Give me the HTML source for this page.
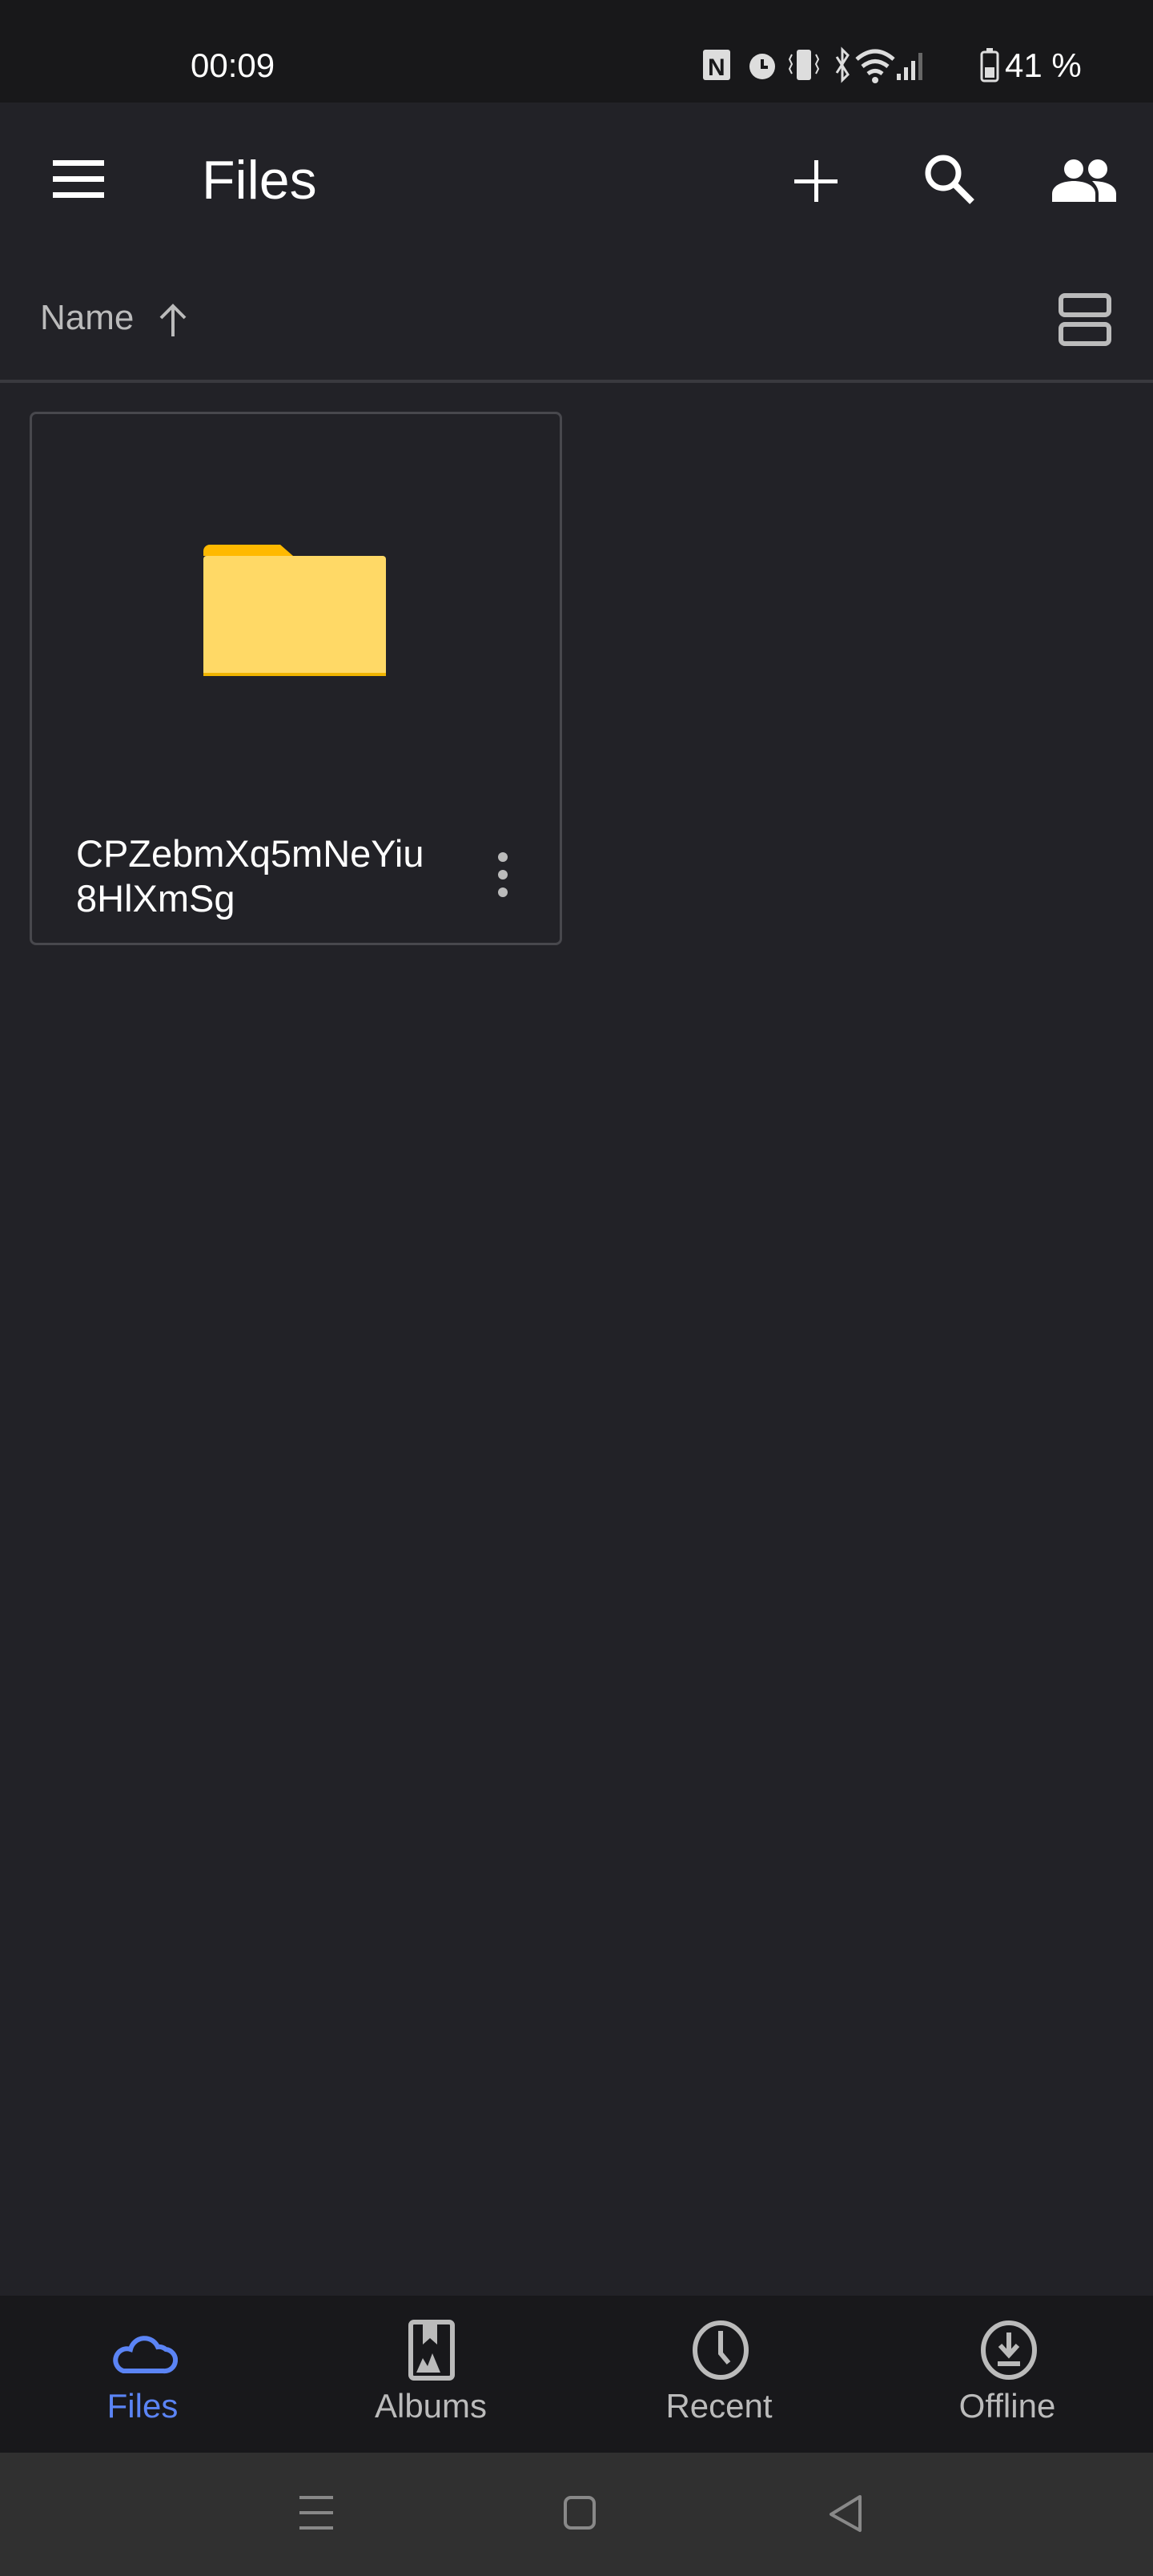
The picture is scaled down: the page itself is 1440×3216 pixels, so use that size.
<!DOCTYPE html>
<html><head><meta charset="utf-8"><style>
*{margin:0;padding:0;box-sizing:border-box}
body{width:1440px;height:3216px;background:#222227;font-family:"Liberation Sans",sans-serif;position:relative;overflow:hidden;color:#fff}
.abs{position:absolute}
</style></head><body>
<div class="abs" style="left:0;top:0;width:1440px;height:128px;background:#18181a"></div>
<div class="abs" style="left:238px;top:58px;font-size:42px;color:#fff">00:09</div>
<svg class="abs" style="left:870px;top:56px" width="490" height="50" viewBox="0 0 490 50">
<rect x="8" y="6" width="34" height="38" rx="3" fill="#ddd"/><text x="14" y="38" font-size="30" font-weight="bold" fill="#18181a" font-family="Liberation Sans">N</text>
<circle cx="82" cy="27" r="16" fill="#ddd"/><path d="M82 18v10h7" stroke="#18181a" stroke-width="4" fill="none"/>
<rect x="125" y="6" width="18" height="38" rx="3" fill="#ddd"/><path d="M119 12l-3 6 3 6-3 6 3 6M149 12l3 6-3 6 3 6-3 6" stroke="#ddd" stroke-width="2" fill="none"/>
<path d="M175 15l14 22-7 7V6l7 7-14 22" stroke="#ddd" stroke-width="3" fill="none"/>
<path d="M200 18q23-20 46 0M207 27q16-13 32 0M214 36q9-7 18 0" stroke="#ddd" stroke-width="5" fill="none"/><circle cx="223" cy="44" r="4" fill="#ddd"/>
<rect x="250" y="36" width="5" height="8" fill="#ddd"/><rect x="259" y="28" width="5" height="16" fill="#ddd"/><rect x="268" y="20" width="5" height="24" fill="#ddd"/><rect x="277" y="10" width="5" height="34" fill="#666"/>
<rect x="356" y="9" width="20" height="36" rx="3" stroke="#ddd" stroke-width="3" fill="none"/><rect x="360" y="28" width="12" height="13" fill="#ddd"/><rect x="362" y="4" width="8" height="4" fill="#ddd"/>
</svg>
<div class="abs" style="left:1255px;top:58px;font-size:42px;color:#fff">41 %</div>
<svg class="abs" style="left:66px;top:200px" width="64" height="48"><rect y="0" width="64" height="7" fill="#fff"/><rect y="20" width="64" height="7" fill="#fff"/><rect y="40" width="64" height="7" fill="#fff"/></svg>
<div class="abs" style="left:252px;top:186px;font-size:68px;font-weight:500">Files</div>
<svg class="abs" style="left:992px;top:200px" width="56" height="56"><rect x="25" y="0" width="5" height="52" fill="#fff"/><rect x="0" y="24" width="54" height="5" fill="#fff"/></svg>
<svg class="abs" style="left:1152px;top:190px" width="70" height="70"><circle cx="26" cy="26" r="19" stroke="#fff" stroke-width="7" fill="none"/><path d="M40 40l22 22" stroke="#fff" stroke-width="8"/></svg>
<svg class="abs" style="left:1314px;top:196px" width="82" height="58"><circle cx="27" cy="15" r="12" fill="#fff"/><circle cx="57" cy="15" r="12" fill="#fff"/><path d="M0 56v-10c0-12 16-16 27-16s27 4 27 16v10z" fill="#fff"/><path d="M50 30c14 0 30 4 30 16v10H58v-10c0-6-3-11-8-16z" fill="#fff"/></svg>
<div class="abs" style="left:50px;top:372px;font-size:44px;color:#bbb">Name</div>
<svg class="abs" style="left:196px;top:378px" width="40" height="44"><path d="M20 42V4M5 19L20 4l15 15" stroke="#bbb" stroke-width="4" fill="none"/></svg>
<svg class="abs" style="left:1322px;top:366px" width="66" height="66"><rect x="3" y="3" width="60" height="24" rx="5" stroke="#bbb" stroke-width="6" fill="none"/><rect x="3" y="39" width="60" height="24" rx="5" stroke="#bbb" stroke-width="6" fill="none"/></svg>
<div class="abs" style="left:0;top:474px;width:1440px;height:4px;background:#3a3a3f"></div>
<div class="abs" style="left:37px;top:514px;width:665px;height:666px;border:3px solid #48484d;border-radius:8px"></div>
<svg class="abs" style="left:254px;top:680px" width="230" height="166" viewBox="0 0 230 166"><path d="M0 8a8 8 0 0 1 8-8h88l16 14H0z" fill="#ffb900"/><rect x="0" y="14" width="228" height="150" rx="4" fill="#ffd966"/><rect x="0" y="160" width="228" height="4" fill="#f0b400"/></svg>
<div class="abs" style="left:95px;top:1038px;font-size:47px;line-height:56px;color:#fff">CPZebmXq5mNeYiu<br>8HlXmSg</div>
<svg class="abs" style="left:618px;top:1062px" width="20" height="64"><circle cx="10" cy="8" r="6" fill="#bbb"/><circle cx="10" cy="30" r="6" fill="#bbb"/><circle cx="10" cy="52" r="6" fill="#bbb"/></svg>
<div class="abs" style="left:0;top:2866px;width:1440px;height:196px;background:#18181b"></div>
<svg class="abs" style="left:136px;top:2906px" width="86" height="60"><path d="M18 54h50a13 13 0 0 0 3-27a13 13 0 0 0-10-3a18 18 0 0 0-34 3a14 14 0 0 0-9 27z" stroke="#5b84f5" stroke-width="6" fill="none"/></svg>
<div class="abs" style="left:0;top:2980px;width:356px;text-align:center;font-size:42px;color:#5b84f5">Files</div>
<svg class="abs" style="left:510px;top:2896px" width="58" height="76"><rect x="3" y="3" width="52" height="70" rx="4" stroke="#bbb" stroke-width="6" fill="none"/><path d="M18 3v28l9-8 9 8V3z" fill="#bbb"/><path d="M10 66l8-18 6 10 6-16 10 24z" fill="#bbb"/></svg>
<div class="abs" style="left:360px;top:2980px;width:356px;text-align:center;font-size:42px;color:#bbb">Albums</div>
<svg class="abs" style="left:864px;top:2896px" width="72" height="76"><ellipse cx="36" cy="38" rx="32" ry="34" stroke="#bbb" stroke-width="6" fill="none"/><path d="M36 14v28l10 12" stroke="#bbb" stroke-width="6" fill="none"/></svg>
<div class="abs" style="left:720px;top:2980px;width:356px;text-align:center;font-size:42px;color:#bbb">Recent</div>
<svg class="abs" style="left:1224px;top:2896px" width="72" height="76"><ellipse cx="36" cy="38" rx="32" ry="34" stroke="#bbb" stroke-width="6" fill="none"/><path d="M36 16v26M25 32l11 12 11-12" stroke="#bbb" stroke-width="6" fill="none"/><rect x="22" y="52" width="28" height="6" fill="#bbb"/></svg>
<div class="abs" style="left:1080px;top:2980px;width:356px;text-align:center;font-size:42px;color:#bbb">Offline</div>
<div class="abs" style="left:0;top:3062px;width:1440px;height:154px;background:#303030"></div>
<svg class="abs" style="left:374px;top:3116px" width="44" height="44"><rect y="0" width="42" height="4" fill="#888"/><rect y="19" width="42" height="4" fill="#888"/><rect y="38" width="42" height="4" fill="#888"/></svg>
<svg class="abs" style="left:704px;top:3116px" width="42" height="44"><rect x="2" y="2" width="36" height="38" rx="7" stroke="#888" stroke-width="4" fill="none"/></svg>
<svg class="abs" style="left:1034px;top:3114px" width="44" height="48"><path d="M40 3L4 25l36 20z" stroke="#888" stroke-width="4" fill="none" stroke-linejoin="round"/></svg>
</body></html>
